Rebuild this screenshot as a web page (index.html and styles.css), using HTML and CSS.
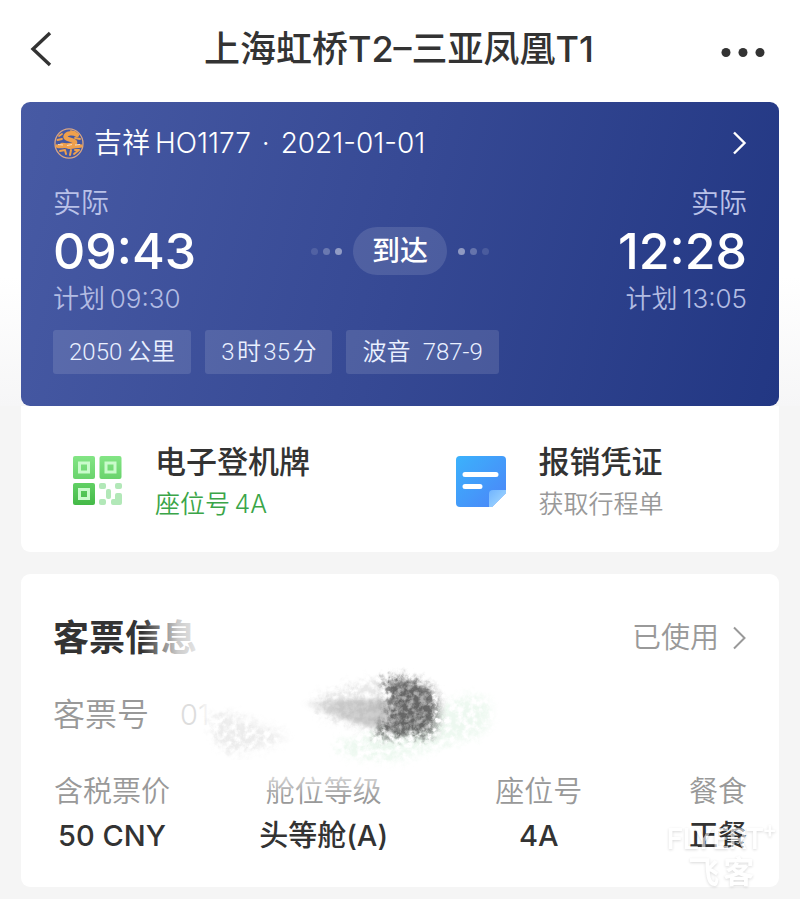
FILE: index.html
```html
<!DOCTYPE html>
<html lang="zh-CN">
    <head>
        <meta charset="UTF-8" />
        <title>上海虹桥T2–三亚凤凰T1</title>
        <meta name="viewport" content="width=device-width, initial-scale=1.0" />
        <link rel="stylesheet" href="styles.css">
    </head>
    <body>
        <div class="hero">
            <header class="topbar">
                <button class="icon-btn" type="button" aria-label="返回">
                    <svg width="24" height="40" viewBox="0 0 24 40">
                        <path d="M21 4 L4 20 L21 36" fill="none" stroke="#333" stroke-width="3.4" />
                    </svg>
                </button>
                <h1 class="topbar-title">上海虹桥T2–三亚凤凰T1</h1>
                <button class="icon-btn" type="button" aria-label="更多">
                    <svg width="44" height="40" viewBox="0 0 44 40">
                        <g fill="#333">
                            <circle cx="5" cy="23.5" r="4.5" />
                            <circle cx="22" cy="23.5" r="4.5" />
                            <circle cx="39" cy="23.5" r="4.5" />
                        </g>
                    </svg>
                </button>
            </header>

            <section class="flight-card">
                <a class="flight-head" href="#">
                    <svg class="airline-logo" width="31" height="32" viewBox="0 0 31 32">
                        <ellipse cx="16" cy="16.5" rx="14" ry="14.7" fill="none" stroke="#d9a584" stroke-width="1.3" />
                        <g fill="none" stroke="#efa04c" stroke-linecap="round" stroke-linejoin="round">
                            <path d="M24 8 C20 5 13 6 12.500 9.500 C12 13 20 12 22 15 C23 18 15 19 9 18" stroke-width="4.400" />
                            <path d="M6 9 L9 7 M4.500 13 L9 12 M18 4 L22 5 M22 11 L27 12" stroke-width="1.800" />
                            <path d="M4 19 C8 21 11 18 15 20 C19 21 23 19 28 19" stroke-width="3.400" />
                            <path d="M7 24 L12 23 L13 27 M18 23 L17 28 M22 23 L26 23 L21 27" stroke-width="2" />
                        </g>
                        <path d="M5 17.500 L10 18 M14 18.500 L19 17.500 M22 18 L27 17.500" stroke="#f8dcc0" stroke-width="1.200" />
                    </svg>
                    <span class="flight-no">吉祥&thinsp;HO1177 <span class="sep">·</span> 2021-01-01</span>
                    <svg class="chevron" width="14" height="24" viewBox="0 0 14 24">
                        <path d="M1 1.500 L11.500 12 L1 22.500" fill="none" stroke="#fff" stroke-width="2.400" />
                    </svg>
                </a>

                <div class="flight-times">
                    <div class="time-col">
                        <div class="time-label">实际</div>
                        <div class="time-value">09:43</div>
                        <div class="time-plan">计划&thinsp;09:30</div>
                    </div>
                    <div class="flight-status">
                        <span class="dots"><i></i><i></i><i></i></span>
                        <span class="status-pill">到达</span>
                        <span class="dots dots-out"><i></i><i></i><i></i></span>
                    </div>
                    <div class="time-col time-col-right">
                        <div class="time-label">实际</div>
                        <div class="time-value">12:28</div>
                        <div class="time-plan">计划&thinsp;13:05</div>
                    </div>
                </div>

                <div class="tags">
                    <span class="tag">2050&thinsp;公里</span>
                    <span class="tag">3&hairsp;时&hairsp;35&hairsp;分</span>
                    <span class="tag">波音&ensp;787-9</span>
                </div>
            </section>
        </div>

        <main class="content">
            <nav class="actions">
                <a class="action" href="#">
                    <svg width="52" height="52" viewBox="0 0 52 52">
                        <defs>
                            <linearGradient id="qr-light" x1="0" y1="0" x2="0" y2="1">
                                <stop offset="0" stop-color="#83e585" />
                                <stop offset="1" stop-color="#69d36c" />
                            </linearGradient>
                            <linearGradient id="qr-dark" x1="0" y1="0" x2="0" y2="1">
                                <stop offset="0" stop-color="#61d064" />
                                <stop offset="1" stop-color="#44b947" />
                            </linearGradient>
                        </defs>
                        <rect x="1" y="0" width="22" height="23" rx="2" fill="url(#qr-light)" />
                        <rect x="27.500" y="0" width="22" height="23" rx="2" fill="url(#qr-light)" />
                        <rect x="1" y="27" width="22" height="22" rx="2" fill="url(#qr-dark)" />
                        <g fill="none" stroke="#c9fbcb" stroke-width="3">
                            <rect x="7.500" y="7" width="9" height="9" />
                            <rect x="34" y="7" width="9" height="9" />
                            <rect x="7.500" y="33.500" width="9" height="9" />
                        </g>
                        <g fill="#b2e8b8">
                            <rect x="27" y="27" width="7" height="6" rx="2" />
                            <rect x="43" y="27" width="7" height="6" rx="2" />
                            <rect x="34" y="33" width="5" height="10" rx="2" />
                            <rect x="27" y="43" width="7" height="6" rx="2" />
                            <path d="M45 37 h3 q2 0 2 2 v8 q0 2 -2 2 h-7 q-2 0 -2 -2 v-2 q0 -2 2 -2 h2 v-4 q0 -2 2 -2z" />
                        </g>
                    </svg>
                    <span class="action-text">
                        <span class="action-title">电子登机牌</span>
                        <span class="action-sub action-sub-green">座位号&thinsp;4A</span>
                    </span>
                </a>
                <a class="action" href="#">
                    <svg width="52" height="52" viewBox="0 0 52 52">
                        <defs>
                            <linearGradient id="note" x1="0" y1="0" x2="1" y2="1">
                                <stop offset="0" stop-color="#3bb2fc" />
                                <stop offset="1" stop-color="#4c84f8" />
                            </linearGradient>
                            <linearGradient id="note-fold" x1="0" y1="0" x2="1" y2="1">
                                <stop offset="0" stop-color="#70b4ff" />
                                <stop offset="1" stop-color="#a9dcff" />
                            </linearGradient>
                        </defs>
                        <path d="M4 0 H46 Q50 0 50 4 V37 L36 51 H4 Q0 51 0 47 V4 Q0 0 4 0z" fill="url(#note)" />
                        <path d="M50 34 V37 L36 51 H33 V38 Q33 34 37 34z" fill="url(#note-fold)" />
                        <path d="M9 18.500 H40 M9 30.500 H24" stroke="#fff" stroke-width="5" stroke-linecap="round" />
                    </svg>
                    <span class="action-text">
                        <span class="action-title">报销凭证</span>
                        <span class="action-sub">获取行程单</span>
                    </span>
                </a>
            </nav>

            <section class="ticket-card">
                <div class="ticket-head">
                    <h2 class="ticket-title">客票信息</h2>
                    <a class="ticket-state" href="#">
                        已使用
                        <svg width="14" height="24" viewBox="0 0 14 24">
                            <path d="M1 1.500 L11.500 12 L1 22.500" fill="none" stroke="#999" stroke-width="2" />
                        </svg>
                    </a>
                </div>
                <div class="ticket-no">
                    <span>客票号</span>
                    <span class="ticket-no-value">01</span>
                </div>
                <table class="ticket-table">
                    <thead>
                        <tr>
                            <th class="col-price">含税票价</th>
                            <th class="col-cabin">舱位等级</th>
                            <th class="col-seat">座位号</th>
                            <th class="col-meal">餐食</th>
                        </tr>
                    </thead>
                    <tbody>
                        <tr>
                            <td>50 CNY</td>
                            <td>头等舱(A)</td>
                            <td>4A</td>
                            <td class="col-meal">正餐</td>
                        </tr>
                    </tbody>
                </table>

                <!-- brush strokes that hide the ticket number -->
                <svg class="smudge" width="420" height="200" viewBox="0 0 420 200" aria-hidden="true">
                    <defs>
                        <linearGradient id="fade-right">
                            <stop offset="0" stop-color="#fff" stop-opacity="0" />
                            <stop offset="0.400" stop-color="#fff" stop-opacity="0.500" />
                            <stop offset="0.600" stop-color="#fff" stop-opacity="0.750" />
                            <stop offset="1" stop-color="#fff" stop-opacity="0.900" />
                        </linearGradient>
                        <linearGradient id="fade-up" x1="0" y1="0" x2="0" y2="1">
                            <stop offset="0" stop-color="#fff" stop-opacity="0.950" />
                            <stop offset="1" stop-color="#fff" stop-opacity="0" />
                        </linearGradient>
                        <linearGradient id="streak">
                            <stop offset="0" stop-color="#999" stop-opacity="0" />
                            <stop offset="0.400" stop-color="#999" stop-opacity="0.400" />
                            <stop offset="1" stop-color="#999" stop-opacity="0.550" />
                        </linearGradient>
                        <filter id="rough" x="-20%" y="-20%" width="140%" height="140%">
                            <feTurbulence type="fractalNoise" baseFrequency="0.160" numOctaves="4" seed="4" result="n" />
                            <feGaussianBlur in="SourceGraphic" stdDeviation="4" result="b" />
                            <feDisplacementMap in="b" in2="n" scale="16" xChannelSelector="R" yChannelSelector="G" result="d" />
                            <feColorMatrix in="n" type="matrix" values="0 0 0 0 0  0 0 0 0 0  0 0 0 0 0  3 0 0 0 -0.850" result="m" />
                            <feComposite in="d" in2="m" operator="in" />
                            <feGaussianBlur stdDeviation="0.500" />
                        </filter>
                        <filter id="soft" x="-20%" y="-20%" width="140%" height="140%">
                            <feGaussianBlur stdDeviation="2" />
                        </filter>
                    </defs>
                    <rect x="22" y="0" width="60" height="60" fill="url(#fade-right)" />
                    <rect x="140" y="152" width="140" height="34" fill="url(#fade-up)" />
                    <rect x="76" y="86" width="18" height="34" fill="url(#fade-right)" />
                    <path d="M92 104 Q106 98 124 106 L170 124 Q130 146 104 138 Q90 124 92 104z" fill="#aaa" opacity="0.220" filter="url(#rough)" />
                    <path d="M196 84 L250 68 L270 68 L276 122 L250 118 L200 104z" fill="#999" opacity="0.220" filter="url(#rough)" />
                    <path d="M180 91 Q220 86 272 88 L276 120 Q230 112 180 91z" fill="url(#streak)" filter="url(#soft)" />
                    <path d="M215 130 Q280 118 342 86 Q362 76 372 94 Q376 112 360 124 Q310 136 276 150 L220 142z" fill="#9fdcae" opacity="0.180" filter="url(#rough)" />
                    <path d="M268 70 Q296 66 308 80 Q318 94 308 118 L266 120 Q280 96 268 70z" fill="#777" opacity="0.600" filter="url(#soft)" />
                    <path d="M262 66 Q296 62 314 78 Q326 94 314 124 L256 125 Q280 96 262 66z" fill="#5a5a5a" opacity="0.850" filter="url(#rough)" />
                </svg>

                <div class="watermark" aria-hidden="true">
                    <div class="watermark-en">FLYERT<sup>+</sup></div>
                    <div class="watermark-cn"><span>飞</span><span>客</span></div>
                </div>
            </section>
        </main>
    </body>
</html>
```

FILE: styles.css
```css
* {
    margin: 0;
    padding: 0;
    box-sizing: border-box;
}

body {
    font-family: Inter, "Noto Sans CJK SC", sans-serif;
    background: #f5f5f5;
    color: #333;
}

a {
    color: inherit;
    text-decoration: none;
}

svg {
    display: block;
    flex-shrink: 0;
}

.hero {
    padding: 0 21px;
    background: linear-gradient(#fff 0, #fff 68%, #f6f6f7 100%);
}

/* top bar */
.topbar {
    display: flex;
    align-items: center;
    justify-content: space-between;
    height: 102px;
    padding: 0 14px 4px 8px;
}

.icon-btn {
    display: flex;
    width: 48px;
    background: none;
    border: none;
    cursor: pointer;
}

.icon-btn:last-child {
    width: 44px;
}

.topbar-title {
    font-size: 36px;
    font-weight: 500;
    line-height: 52px;
    white-space: nowrap;
}

/* flight card */
.flight-card {
    padding: 24px 32px 32px;
    border-radius: 9px;
    background: linear-gradient(105deg, #475aa4 0%, #364994 50%, #223783 100%);
    color: #fff;
}

.flight-head {
    display: flex;
    align-items: center;
    height: 34px;
    margin-bottom: 24px;
}

.airline-logo {
    margin-right: 10px;
}

.flight-no {
    flex: 1;
    font-size: 28px;
    font-weight: 350;
    line-height: 34px;
}

.sep {
    margin: 0 3px;
}

.flight-times {
    display: flex;
    align-items: center;
    justify-content: space-between;
    margin-bottom: 12px;
}

.time-col {
    flex: 1;
}

.time-col-right {
    text-align: right;
}

.time-label {
    font-size: 28px;
    font-weight: 350;
    line-height: 38px;
    color: #b9c1e8;
}

.time-value {
    font-size: 50px;
    font-weight: 500;
    line-height: 58px;
}

.time-plan {
    font-size: 26px;
    font-weight: 350;
    line-height: 38px;
    color: #b3bce3;
}

.flight-status {
    display: flex;
    align-items: center;
    gap: 11px;
}

.status-pill {
    padding: 0 19px;
    border-radius: 24px;
    background: rgba(255, 255, 255, 0.12);
    font-size: 28px;
    font-weight: 500;
    line-height: 48px;
}

.dots {
    display: flex;
    gap: 5px;
}

.dots-out {
    flex-direction: row-reverse;
}

.dots i {
    width: 7px;
    height: 7px;
    border-radius: 50%;
    background: #fff;
    opacity: 0.12;
}

.dots i:nth-child(2) {
    opacity: 0.25;
}

.dots i:nth-child(3) {
    opacity: 0.45;
}

.tags {
    display: flex;
    gap: 14px;
}

.tag {
    padding: 1px 16px 0;
    border-radius: 3px;
    background: rgba(255, 255, 255, 0.12);
    font-family: Roboto, "Noto Sans CJK SC", sans-serif;
    font-size: 24px;
    font-weight: 350;
    line-height: 43px;
    color: #eaf0ff;
}

/* white cards below */
.content {
    padding: 0 21px 12px;
}

.actions {
    display: grid;
    grid-template-columns: 1fr 1fr;
    gap: 60px;
    padding: 36px 0 30px 51px;
    border-radius: 0 0 9px 9px;
    background: #fff;
}

.action {
    display: flex;
    align-items: center;
    gap: 31px;
}

.action-text {
    display: flex;
    flex-direction: column;
    gap: 4px;
}

.action-title {
    font-size: 31px;
    font-weight: 500;
    line-height: 40px;
}

.action-sub {
    font-size: 25px;
    font-weight: 350;
    line-height: 36px;
    color: #999;
}

.action-sub-green {
    color: #3aa548;
}

.ticket-card {
    position: relative;
    margin-top: 22px;
    padding: 38px 32px 29px;
    border-radius: 9px;
    background: #fff;
}

.ticket-head {
    display: flex;
    align-items: center;
    justify-content: space-between;
    margin-bottom: 29px;
}

.ticket-title {
    font-size: 36px;
    font-weight: 700;
    line-height: 52px;
}

.ticket-state {
    display: flex;
    align-items: center;
    gap: 14px;
    font-size: 29px;
    font-weight: 350;
    line-height: 40px;
    color: #999;
}

.ticket-no {
    display: flex;
    gap: 31px;
    margin-bottom: 33px;
    font-size: 32px;
    font-weight: 350;
    line-height: 44px;
    color: #999;
}

.ticket-no-value {
    font-size: 29px;
    font-weight: 300;
    color: #ddd;
}

.ticket-table {
    width: 100%;
    table-layout: fixed;
    border-collapse: collapse;
    font-size: 29px;
    line-height: 44px;
    text-align: center;
    white-space: nowrap;
}

.ticket-table th {
    font-weight: 350;
    color: #999;
}

.ticket-table td {
    font-weight: 500;
}

.col-price {
    width: 17%;
}

.col-cabin {
    width: 44%;
}

.col-seat {
    width: 18%;
}

.ticket-table .col-meal {
    text-align: right;
}

.smudge {
    position: absolute;
    top: 38px;
    left: 99px;
    pointer-events: none;
}

.watermark {
    position: absolute;
    right: 3px;
    bottom: -4px;
    color: #fff;
    font-family: Roboto, "Noto Sans CJK SC", sans-serif;
    opacity: 0.6;
    text-shadow: 0 1px 3px rgba(0, 0, 0, 0.25);
    pointer-events: none;
}

.watermark-en {
    font-size: 29px;
    font-weight: 500;
    line-height: 32px;
}

.watermark-en sup {
    font-size: 22px;
    line-height: 0;
}

.watermark-cn {
    display: flex;
    justify-content: center;
    gap: 4px;
    font-size: 31px;
    font-weight: 700;
    line-height: 36px;
}
```
